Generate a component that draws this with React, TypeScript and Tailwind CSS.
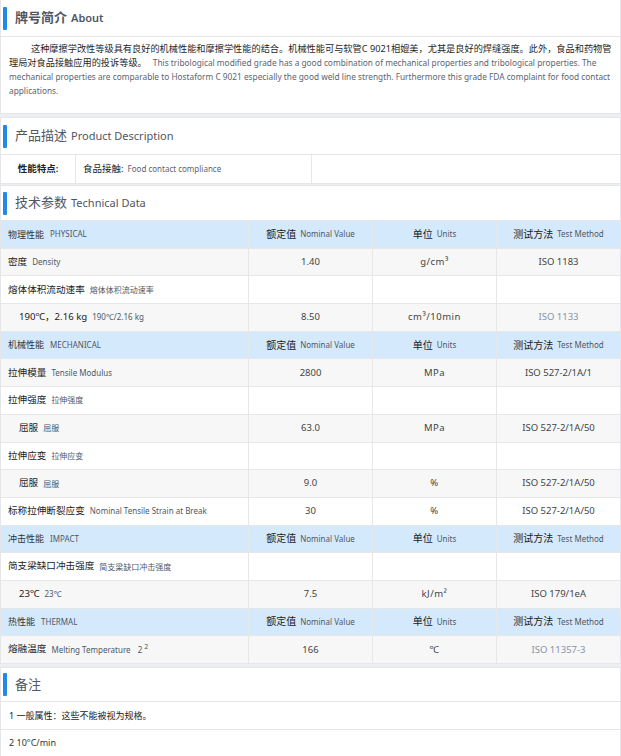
import React from 'react';

type Row =
  | { kind: 'head'; zh: string; en: string }
  | {
      kind: 'row';
      zh: string;
      en: React.ReactNode;
      indent?: boolean;
      value?: string;
      unit?: React.ReactNode;
      method?: string;
      link?: boolean;
      gray?: boolean;
    };

const rows: Row[] = [
  { kind: 'head', zh: '物理性能', en: 'PHYSICAL' },
  { kind: 'row', zh: '密度', en: 'Density', value: '1.40', unit: 'g/cm³', method: 'ISO 1183', gray: true },
  { kind: 'row', zh: '熔体体积流动速率', en: '熔体体积流动速率' },
  { kind: 'row', zh: '190℃，2.16 kg', en: '190℃/2.16 kg', indent: true, value: '8.50', unit: 'cm³/10min', method: 'ISO 1133', link: true, gray: true },
  { kind: 'head', zh: '机械性能', en: 'MECHANICAL' },
  { kind: 'row', zh: '拉伸模量', en: 'Tensile Modulus', value: '2800', unit: 'MPa', method: 'ISO 527-2/1A/1', gray: true },
  { kind: 'row', zh: '拉伸强度', en: '拉伸强度' },
  { kind: 'row', zh: '屈服', en: '屈服', indent: true, value: '63.0', unit: 'MPa', method: 'ISO 527-2/1A/50', gray: true },
  { kind: 'row', zh: '拉伸应变', en: '拉伸应变' },
  { kind: 'row', zh: '屈服', en: '屈服', indent: true, value: '9.0', unit: '%', method: 'ISO 527-2/1A/50', gray: true },
  { kind: 'row', zh: '标称拉伸断裂应变', en: 'Nominal Tensile Strain at Break', value: '30', unit: '%', method: 'ISO 527-2/1A/50' },
  { kind: 'head', zh: '冲击性能', en: 'IMPACT' },
  { kind: 'row', zh: '简支梁缺口冲击强度', en: '简支梁缺口冲击强度' },
  { kind: 'row', zh: '23℃', en: '23℃', indent: true, value: '7.5', unit: 'kJ/m²', method: 'ISO 179/1eA', gray: true },
  { kind: 'head', zh: '热性能', en: 'THERMAL' },
  {
    kind: 'row',
    zh: '熔融温度',
    en: (
      <>
        Melting Temperature <span className="ml-[5px]">2</span>
        <sup className="ml-[2px] text-[7px]">2</sup>
      </>
    ),
    value: '166',
    unit: '℃',
    method: 'ISO 11357-3',
    link: true,
    gray: true,
  },
];

function Heading({ zh, en, bold, h }: { zh: string; en?: string; bold?: boolean; h: string }) {
  return (
    <div className={`flex items-center border-b border-[#e4e6e9] ${h}`}>
      <div className="ml-[2px] h-[23px] w-[4px] rounded-[1px] bg-[#2388ea]" />
      <div className="ml-[8px] flex items-baseline text-[#505663]">
        <span className={`text-[13px] ${bold ? 'font-bold' : ''}`}>{zh}</span>
        {en && <span className={`ml-[4px] text-[11px] ${bold ? 'font-semibold' : ''}`}>{en}</span>}
      </div>
    </div>
  );
}

function Cell({ children, className = '' }: { children?: React.ReactNode; className?: string }) {
  return <div className={`flex items-center border-r border-[#e6e7e9] ${className}`}>{children}</div>;
}

export default function App() {
  return (
    <div className="h-[756px] w-[621px] overflow-hidden bg-[#eceef1] font-['Noto_Sans','Noto_Sans_CJK_SC',sans-serif]">
      {/* About */}
      <section className="h-[114px] border-x border-b border-[#e4e6e9] bg-white">
        <Heading zh="牌号简介" en="About" bold h="h-[37px]" />
        <p className="px-[8px] pt-[5px] indent-[22px] text-[9.2px] leading-[14px] text-[#1f1f1f]">
          这种摩擦学改性等级具有良好的机械性能和摩擦学性能的结合。机械性能可与软管C 9021相媲美，尤其是良好的焊缝强度。此外，食品和药物管理局对食品接触应用的投诉等级。
          <span className="ml-[6px] text-[8.3px] text-[#5d6470]">
            This tribological modified grade has a good combination of mechanical properties and tribological properties. The mechanical properties are comparable to Hostaform C 9021 especially the good weld line strength. Furthermore this grade FDA complaint for food contact applications.
          </span>
        </p>
      </section>

      {/* Product description */}
      <section className="mt-[3px] h-[67px] border border-[#e4e6e9] bg-white">
        <Heading zh="产品描述" en="Product Description" h="h-[37px]" />
        <div className="grid h-[28px] grid-cols-[75px_236px_1fr] text-[9.5px]">
          <Cell className="justify-center font-semibold text-[#222]">性能特点:</Cell>
          <Cell className="pl-[7px]">
            <span className="text-[#222]">食品接触:</span>
            <span className="ml-[4px] text-[8px] text-[#5d6470]">Food contact compliance</span>
          </Cell>
          <div />
        </div>
      </section>

      {/* Technical data */}
      <section className="mt-[1px] border-x border-t border-[#e4e6e9] bg-white">
        <Heading zh="技术参数" en="Technical Data" h="h-[35px]" />
        {rows.map((r, i) =>
          r.kind === 'head' ? (
            <div key={i} className="grid h-[27.7px] grid-cols-[248px_124px_124px_1fr] border-b border-[#e6e7e9] bg-[#d5e9fc]">
              <Cell className="pl-[7px]">
                <span className="text-[9px] text-[#333]">{r.zh}</span>
                <span className="ml-[6px] text-[8px] text-[#4f5866]">{r.en}</span>
              </Cell>
              <Cell className="justify-center">
                <span className="text-[10px] text-[#1a1a1a]">额定值</span>
                <span className="ml-[4px] text-[8px] text-[#4f5866]">Nominal Value</span>
              </Cell>
              <Cell className="justify-center">
                <span className="text-[10px] text-[#1a1a1a]">单位</span>
                <span className="ml-[4px] text-[8px] text-[#4f5866]">Units</span>
              </Cell>
              <Cell className="justify-center border-r-0">
                <span className="text-[10px] text-[#1a1a1a]">测试方法</span>
                <span className="ml-[4px] text-[8px] text-[#4f5866]">Test Method</span>
              </Cell>
            </div>
          ) : (
            <div
              key={i}
              className={`grid h-[27.7px] grid-cols-[248px_124px_124px_1fr] border-b border-[#e6e7e9] ${r.gray ? 'bg-[#f7f7f7]' : 'bg-white'}`}
            >
              <Cell className={r.indent ? 'pl-[18px]' : 'pl-[7px]'}>
                <span className="text-[9.6px] text-[#222]">{r.zh}</span>
                <span className="ml-[5px] text-[8px] text-[#4f5866]">{r.en}</span>
              </Cell>
              <Cell className="justify-center text-[9.5px] text-[#444]">{r.value}</Cell>
              <Cell className="justify-center text-[9.5px] tracking-[0.5px] text-[#444]">{r.unit}</Cell>
              <Cell className={`justify-center border-r-0 text-[9.5px] ${r.link ? 'text-[#8494aa]' : 'text-[#444]'}`}>
                {r.method}
              </Cell>
            </div>
          )
        )}
      </section>

      {/* Notes */}
      <section className="mt-[3px] h-[100px] border-x border-t border-[#e4e6e9] bg-white">
        <Heading zh="备注" h="h-[34px]" />
        <div className="flex h-[28px] items-center border-b border-[#e6e7e9] pl-[8px] text-[9px] text-[#222]">
          1 一般属性：这些不能被视为规格。
        </div>
        <div className="flex h-[27px] items-center border-b border-[#e6e7e9] pl-[8px] text-[9px] text-[#333]">
          2 10°C/min
        </div>
      </section>
    </div>
  );
}
